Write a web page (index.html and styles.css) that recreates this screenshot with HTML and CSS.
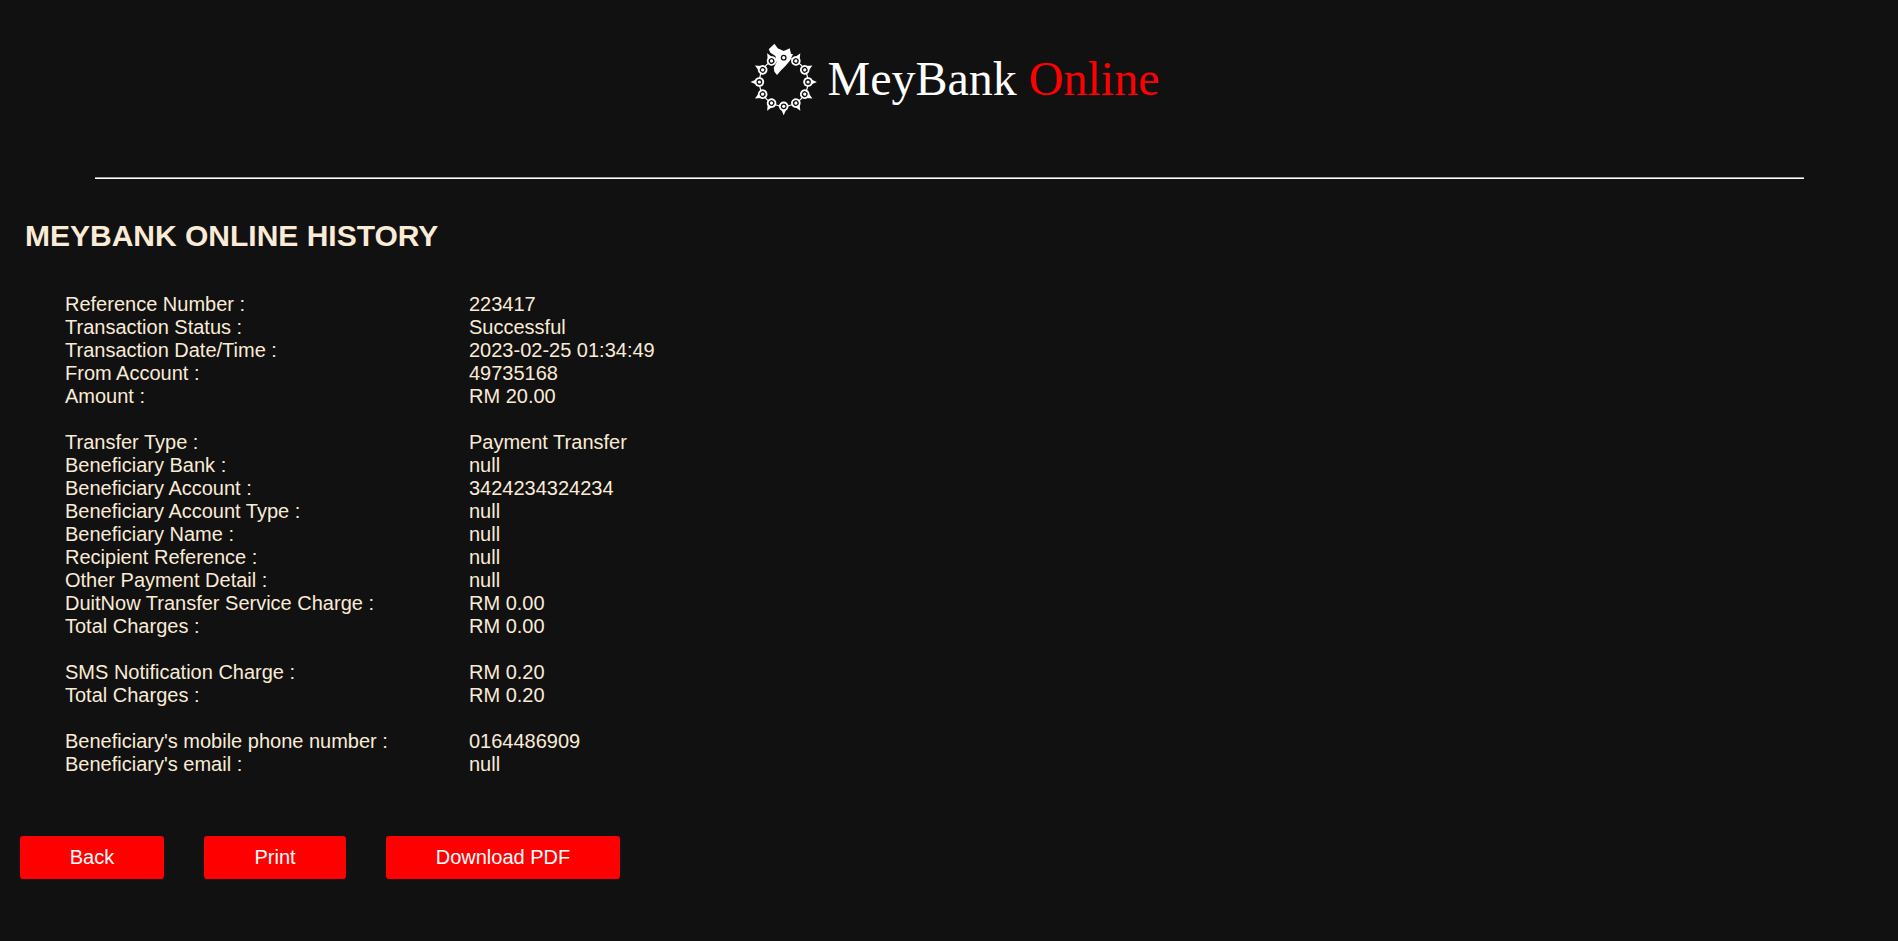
FILE: index.html
```html
<!DOCTYPE html>
<html lang="en">
<head>
<meta charset="utf-8">
<title>MeyBank Online</title>
<link rel="stylesheet" href="styles.css">
</head>
<body>
<header class="brand">
  <svg class="logo" width="80" height="85" viewBox="0 0 80 85" aria-hidden="true">
    <defs>
      <g id="bead">
        <path class="spike" d="M37.7 12.8 L40.2 18.5 L35.2 18.5 Z"/>
        <circle class="white" cx="37.7" cy="21.7" r="4.8"/>
        <circle class="dark" cx="37.7" cy="21.7" r="2.9"/>
        <circle class="white" cx="37.7" cy="21.7" r="1.6"/>
      </g>
    </defs>
    <circle class="ring" cx="37.7" cy="46" r="24.3"/>
    <path class="white" d="M22.7 13.3 L28.4 7.7 L31.7 12.3 L37.7 15 L41.7 13.3 L43.7 12.3 L45 17.7 L47 18.3 L43.7 25 L39.4 30 L34.4 35 L31 39 L28.4 35.7 L27.7 31.7 L30.4 26.7 L29.4 20 L24.4 16.7 Z"/>
    <circle class="dark" cx="37.7" cy="21.7" r="2.9"/>
    <circle class="white" cx="37.7" cy="21.7" r="1.6"/>
    <use href="#bead" transform="rotate(30 37.7 46)"/>
    <use href="#bead" transform="rotate(60 37.7 46)"/>
    <use href="#bead" transform="rotate(90 37.7 46)"/>
    <use href="#bead" transform="rotate(120 37.7 46)"/>
    <use href="#bead" transform="rotate(150 37.7 46)"/>
    <use href="#bead" transform="rotate(180 37.7 46)"/>
    <use href="#bead" transform="rotate(210 37.7 46)"/>
    <use href="#bead" transform="rotate(240 37.7 46)"/>
    <use href="#bead" transform="rotate(270 37.7 46)"/>
    <use href="#bead" transform="rotate(300 37.7 46)"/>
    <use href="#bead" transform="rotate(330 37.7 46)"/>
  </svg>
  <h1 class="title">MeyBank <span class="accent">Online</span></h1>
</header>
<hr class="rule">
<main>
  <h2 class="heading">MEYBANK ONLINE HISTORY</h2>
  <div class="details">
    <span>Reference Number :</span><span>223417</span>
    <span>Transaction Status :</span><span>Successful</span>
    <span>Transaction Date/Time :</span><span>2023-02-25 01:34:49</span>
    <span>From Account :</span><span>49735168</span>
    <span>Amount :</span><span>RM 20.00</span>
    <span class="spacer"></span>
    <span>Transfer Type :</span><span>Payment Transfer</span>
    <span>Beneficiary Bank :</span><span>null</span>
    <span>Beneficiary Account :</span><span>3424234324234</span>
    <span>Beneficiary Account Type :</span><span>null</span>
    <span>Beneficiary Name :</span><span>null</span>
    <span>Recipient Reference :</span><span>null</span>
    <span>Other Payment Detail :</span><span>null</span>
    <span>DuitNow Transfer Service Charge :</span><span>RM 0.00</span>
    <span>Total Charges :</span><span>RM 0.00</span>
    <span class="spacer"></span>
    <span>SMS Notification Charge :</span><span>RM 0.20</span>
    <span>Total Charges :</span><span>RM 0.20</span>
    <span class="spacer"></span>
    <span>Beneficiary's mobile phone number :</span><span>0164486909</span>
    <span>Beneficiary's email :</span><span>null</span>
  </div>
  <div class="actions">
    <button class="btn btn-back" type="button">Back</button>
    <button class="btn btn-print" type="button">Print</button>
    <button class="btn btn-pdf" type="button">Download PDF</button>
  </div>
</main>
</body>
</html>
```
FILE: styles.css
```css
* { box-sizing: border-box; }
html, body { height: 100%; }
body {
  margin: 0;
  background: #111111;
  color: #faebd7;
  font-family: "Liberation Sans", Arial, sans-serif;
  font-size: 20px;
  overflow: hidden;
}
.brand {
  display: flex;
  justify-content: center;
  align-items: center;
  height: 157px;
  padding-left: 7px;
}
.logo { display: block; margin-right: 2px; }
.white { fill: #ffffff; }
.dark { fill: #111111; }
.spike { fill: #ffffff; }
.ring { fill: none; stroke: #ffffff; stroke-width: 1.2; }
.title {
  margin: 0;
  font-family: "Liberation Serif", "Times New Roman", serif;
  font-size: 48px;
  font-weight: 400;
  color: #ffffff;
  line-height: 55px;
}
.accent { color: #ff0000; }
.rule {
  width: 1709px;
  height: 2px;
  margin: 20px 0 0 95px;
  border: 0;
  border-top: 1px solid #a0a0a0;
  background: #ffffff;
}
.heading {
  margin: 40px 0 0 25px;
  font-size: 30px;
  font-weight: 700;
  line-height: 33px;
}
.details {
  display: grid;
  grid-template-columns: 404px 1fr;
  grid-auto-rows: 23px;
  margin: 41px 0 0 65px;
  line-height: 23px;
}
.spacer { grid-column: 1 / -1; }
.actions {
  display: flex;
  gap: 40px;
  margin: 60px 0 0 20px;
}
.btn {
  height: 43px;
  padding: 0;
  border: 0;
  border-radius: 3px;
  background: #ff0000;
  color: #ffffff;
  font: 20px "Liberation Sans", Arial, sans-serif;
}
.btn-back { width: 144px; }
.btn-print { width: 142px; }
.btn-pdf { width: 234px; }
```
